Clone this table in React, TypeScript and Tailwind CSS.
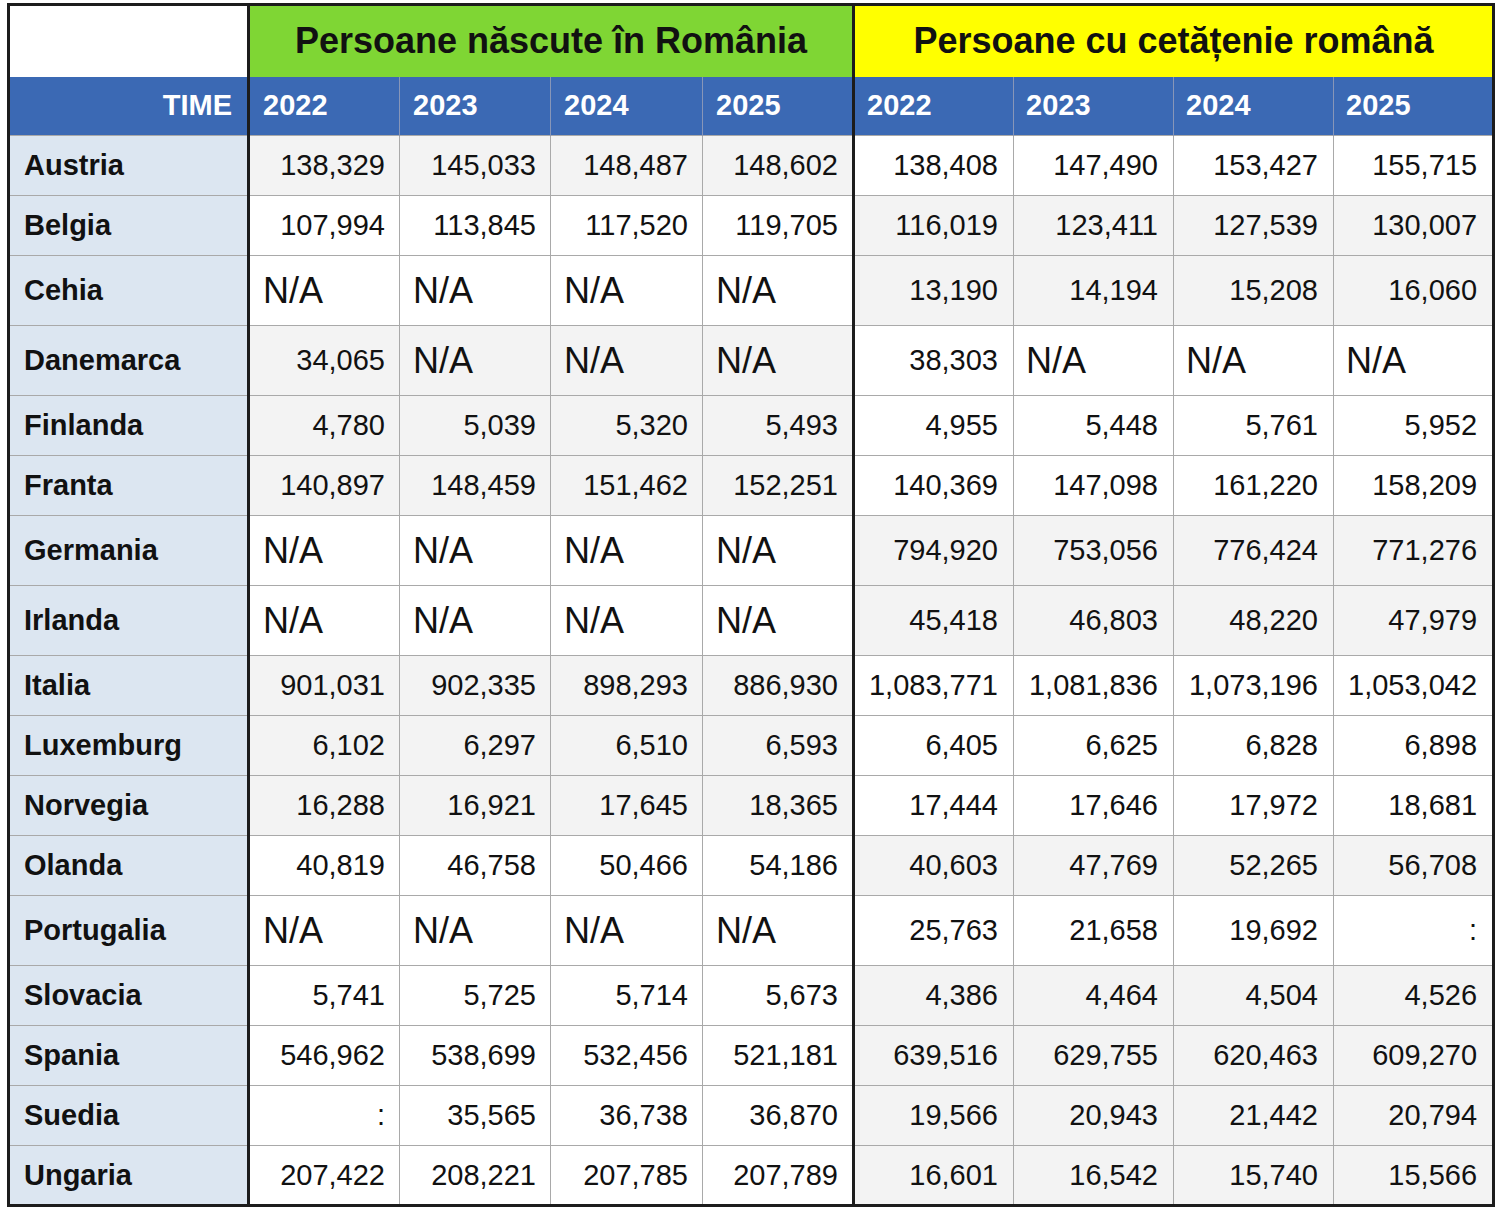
import React from "react";

const NA = "N/A";

type Row = {
  name: string;
  born: string[];
  citizens: string[];
  bornGray: boolean;
  citGray: boolean;
};

const rows: Row[] = [
  { name: "Austria", born: ["138,329", "145,033", "148,487", "148,602"], citizens: ["138,408", "147,490", "153,427", "155,715"], bornGray: true, citGray: false },
  { name: "Belgia", born: ["107,994", "113,845", "117,520", "119,705"], citizens: ["116,019", "123,411", "127,539", "130,007"], bornGray: false, citGray: true },
  { name: "Cehia", born: [NA, NA, NA, NA], citizens: ["13,190", "14,194", "15,208", "16,060"], bornGray: false, citGray: true },
  { name: "Danemarca", born: ["34,065", NA, NA, NA], citizens: ["38,303", NA, NA, NA], bornGray: true, citGray: false },
  { name: "Finlanda", born: ["4,780", "5,039", "5,320", "5,493"], citizens: ["4,955", "5,448", "5,761", "5,952"], bornGray: true, citGray: false },
  { name: "Franta", born: ["140,897", "148,459", "151,462", "152,251"], citizens: ["140,369", "147,098", "161,220", "158,209"], bornGray: true, citGray: false },
  { name: "Germania", born: [NA, NA, NA, NA], citizens: ["794,920", "753,056", "776,424", "771,276"], bornGray: false, citGray: true },
  { name: "Irlanda", born: [NA, NA, NA, NA], citizens: ["45,418", "46,803", "48,220", "47,979"], bornGray: false, citGray: true },
  { name: "Italia", born: ["901,031", "902,335", "898,293", "886,930"], citizens: ["1,083,771", "1,081,836", "1,073,196", "1,053,042"], bornGray: true, citGray: false },
  { name: "Luxemburg", born: ["6,102", "6,297", "6,510", "6,593"], citizens: ["6,405", "6,625", "6,828", "6,898"], bornGray: true, citGray: false },
  { name: "Norvegia", born: ["16,288", "16,921", "17,645", "18,365"], citizens: ["17,444", "17,646", "17,972", "18,681"], bornGray: true, citGray: false },
  { name: "Olanda", born: ["40,819", "46,758", "50,466", "54,186"], citizens: ["40,603", "47,769", "52,265", "56,708"], bornGray: false, citGray: true },
  { name: "Portugalia", born: [NA, NA, NA, NA], citizens: ["25,763", "21,658", "19,692", ":"], bornGray: false, citGray: false },
  { name: "Slovacia", born: ["5,741", "5,725", "5,714", "5,673"], citizens: ["4,386", "4,464", "4,504", "4,526"], bornGray: false, citGray: true },
  { name: "Spania", born: ["546,962", "538,699", "532,456", "521,181"], citizens: ["639,516", "629,755", "620,463", "609,270"], bornGray: false, citGray: true },
  { name: "Suedia", born: [":", "35,565", "36,738", "36,870"], citizens: ["19,566", "20,943", "21,442", "20,794"], bornGray: false, citGray: true },
  { name: "Ungaria", born: ["207,422", "208,221", "207,785", "207,789"], citizens: ["16,601", "16,542", "15,740", "15,566"], bornGray: false, citGray: true },
];

const years = ["2022", "2023", "2024", "2025"];

const ValueCell: React.FC<{ value: string; gray: boolean; first: boolean; right?: boolean }> = ({ value, gray, first, right }) => {
  const bg = gray ? "bg-[#f3f3f3]" : "bg-white";
  const edge = first ? "border-l-[3px] border-l-[#1c1c1c]" : "";
  if (value === NA) {
    return (
      <td className={`${bg} ${edge} border border-[#a9a9a9] text-left text-[36px] leading-none ${right ? "pl-[12px]" : "pl-[13px]"}`}>
        N/A
      </td>
    );
  }
  return (
    <td className={`${bg} ${edge} border border-[#a9a9a9] text-right text-[29px] leading-none ${right ? "pr-[15px]" : "pr-[14px]"}`}>
      {value}
    </td>
  );
};

export default function App() {
  return (
    <div className="min-h-[1212px] bg-white pl-[7px] pt-[3px] font-['Liberation_Sans',Arial,sans-serif] text-[#111]">
      <table className="w-[1488px] table-fixed border-collapse border-[3px] border-[#1c1c1c]">
        <colgroup>
          <col className="w-[240px]" />
          <col className="w-[151px]" />
          <col className="w-[151px]" />
          <col className="w-[152px]" />
          <col className="w-[151px]" />
          <col className="w-[160px]" />
          <col className="w-[160px]" />
          <col className="w-[160px]" />
          <col className="w-[160px]" />
        </colgroup>
        <thead>
          <tr className="h-[72px]">
            <th className="bg-white"></th>
            <th
              colSpan={4}
              className="border-l-[3px] border-l-[#1c1c1c] bg-[#7fd634] text-center text-[36px] font-bold"
            >
              Persoane născute în România
            </th>
            <th
              colSpan={4}
              className="border-l-[3px] border-l-[#1c1c1c] bg-[#ffff00] text-center text-[36px] font-bold"
            >
              Persoane cu cetățenie română
            </th>
          </tr>
          <tr className="h-[59px] bg-[#3b69b4] text-white">
            <th className="pr-[15px] text-right text-[29px] font-bold">TIME</th>
            {years.map((y, i) => (
              <th
                key={`b${y}`}
                className={`pl-[13px] text-left text-[29px] font-bold ${
                  i === 0 ? "border-l-[3px] border-l-[#1c1c1c]" : "border-l border-l-[#8796b8]"
                }`}
              >
                {y}
              </th>
            ))}
            {years.map((y, i) => (
              <th
                key={`c${y}`}
                className={`pl-[12px] text-left text-[29px] font-bold ${
                  i === 0 ? "border-l-[3px] border-l-[#1c1c1c]" : "border-l border-l-[#8796b8]"
                }`}
              >
                {y}
              </th>
            ))}
          </tr>
        </thead>
        <tbody>
          {rows.map((r) => {
            const tall = r.born.includes(NA) || r.citizens.includes(NA);
            return (
              <tr key={r.name} className={tall ? "h-[70px]" : "h-[60px]"}>
                <td className="border border-[#a9a9a9] border-l-[3px] border-l-[#1c1c1c] bg-[#dce6f1] pl-[14px] text-left text-[29px] font-bold leading-none">
                  {r.name}
                </td>
                {r.born.map((v, i) => (
                  <ValueCell key={`b${i}`} value={v} gray={r.bornGray} first={i === 0} />
                ))}
                {r.citizens.map((v, i) => (
                  <ValueCell key={`c${i}`} value={v} gray={r.citGray} first={i === 0} right />
                ))}
              </tr>
            );
          })}
        </tbody>
      </table>
    </div>
  );
}
